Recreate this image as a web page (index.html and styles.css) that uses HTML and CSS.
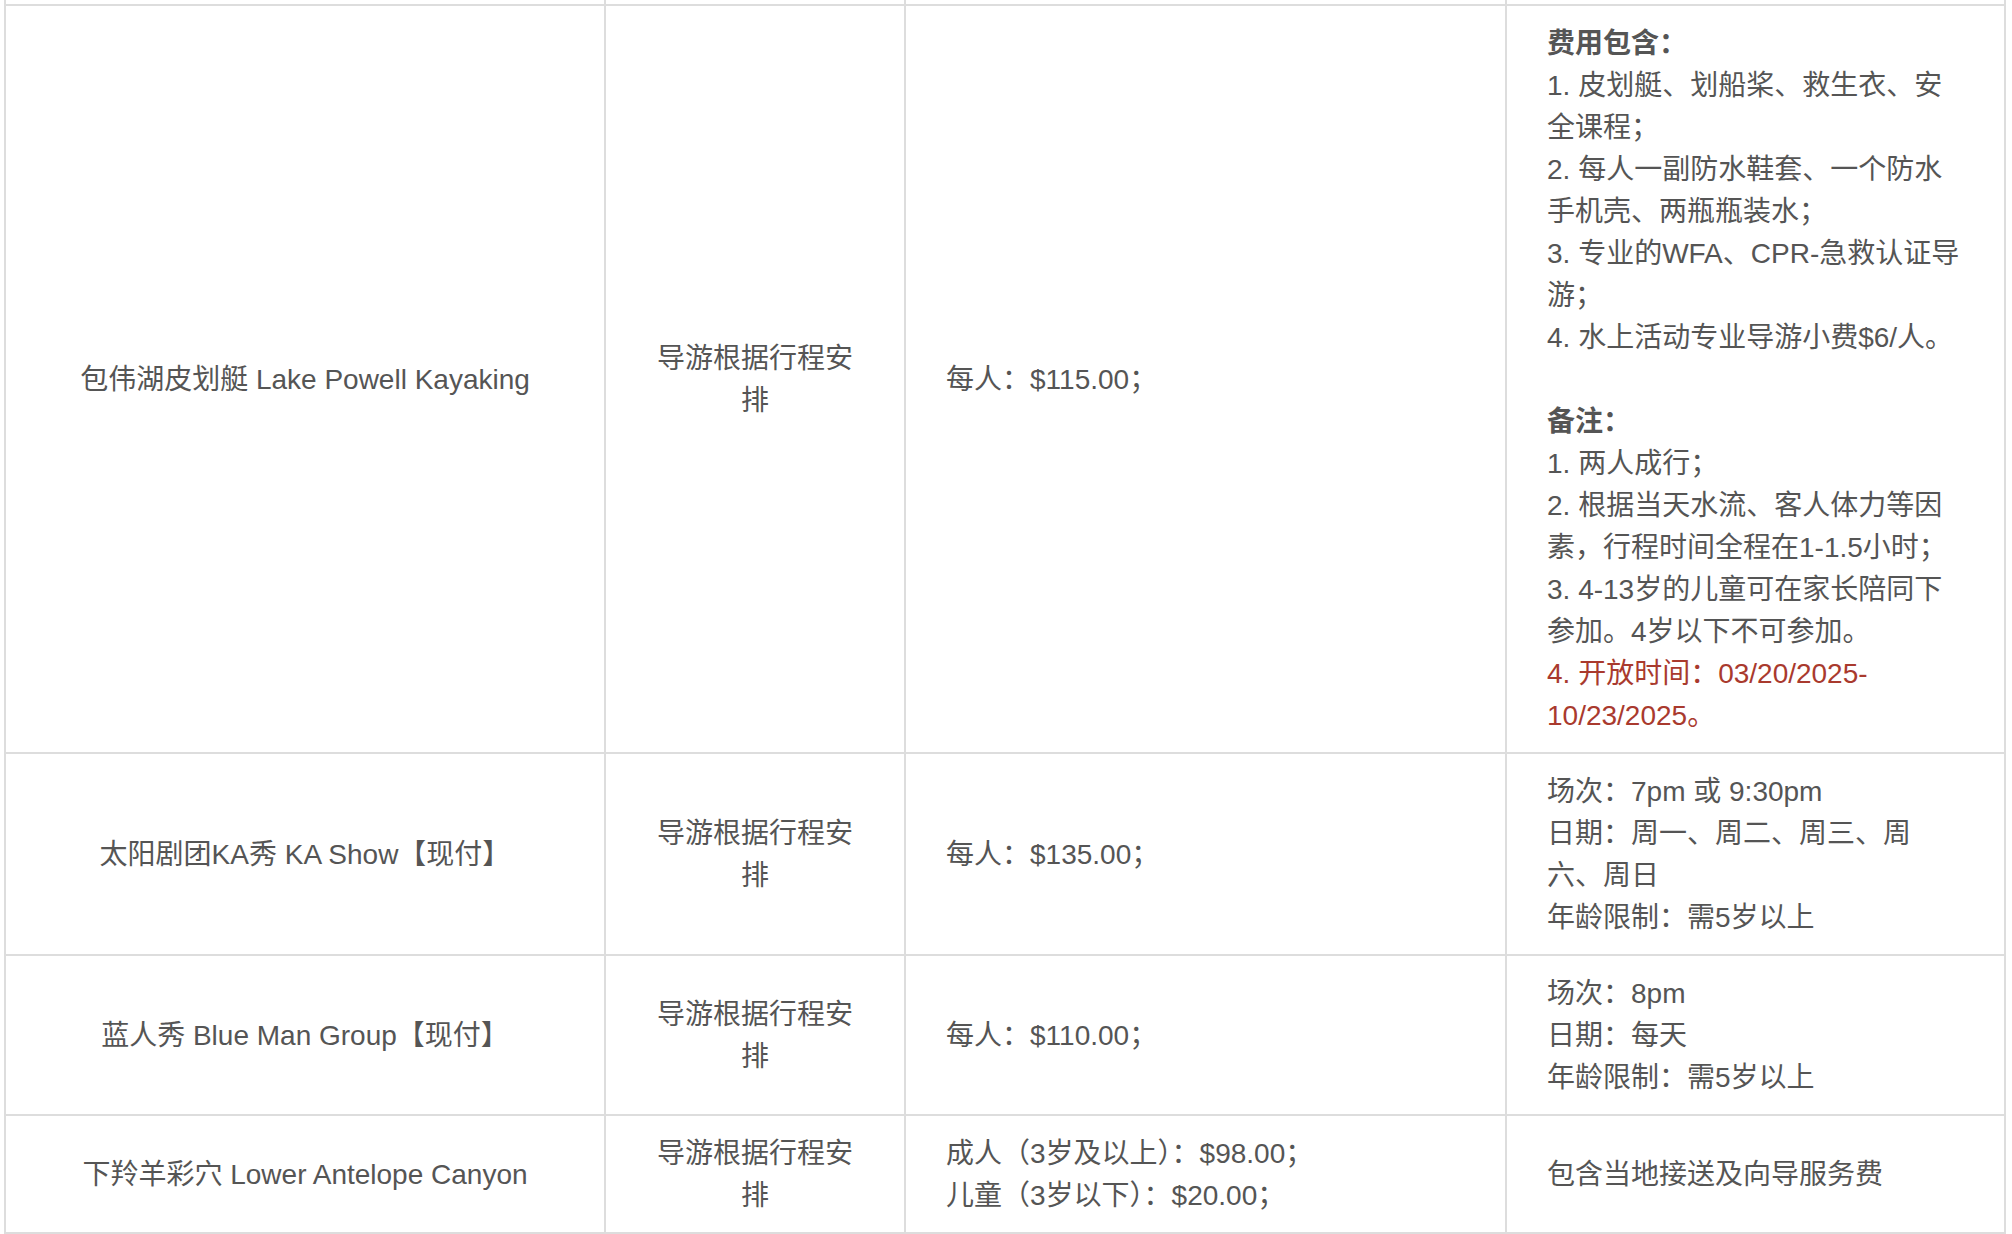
FILE: index.html
```html
<!DOCTYPE html>
<html lang="zh-CN">
<head>
<meta charset="utf-8">
<title>自费项目</title>
<link rel="stylesheet" href="styles.css">
</head>
<body>
<table class="fee-table">
  <tbody>
    <tr class="sliver">
      <td class="c-name"></td>
      <td class="c-guide"></td>
      <td class="c-price"></td>
      <td class="c-note"></td>
    </tr>
    <tr>
      <td class="c-name">包伟湖皮划艇 Lake Powell Kayaking</td>
      <td class="c-guide">导游根据行程安排</td>
      <td class="c-price">每人：$115.00；</td>
      <td class="c-note">
        <p class="note-block"><strong>费用包含：</strong><br>1. 皮划艇、划船桨、救生衣、安全课程；<br>2. 每人一副防水鞋套、一个防水手机壳、两瓶瓶装水；<br>3. 专业的WFA、CPR-急救认证导游；<br>4. 水上活动专业导游小费$6/人。</p>
        <p class="note-block"><strong>备注：</strong><br>1. 两人成行；<br>2. 根据当天水流、客人体力等因素，行程时间全程在1-1.5小时；<br>3. 4-13岁的儿童可在家长陪同下参加。4岁以下不可参加。<br><span class="red">4. 开放时间：03/20/2025-10/23/2025。</span></p>
      </td>
    </tr>
    <tr>
      <td class="c-name">太阳剧团KA秀 KA Show【现付】</td>
      <td class="c-guide">导游根据行程安排</td>
      <td class="c-price">每人：$135.00；</td>
      <td class="c-note">场次：7pm 或 9:30pm<br>日期：周一、周二、周三、周六、周日<br>年龄限制：需5岁以上</td>
    </tr>
    <tr>
      <td class="c-name">蓝人秀 Blue Man Group【现付】</td>
      <td class="c-guide">导游根据行程安排</td>
      <td class="c-price">每人：$110.00；</td>
      <td class="c-note">场次：8pm<br>日期：每天<br>年龄限制：需5岁以上</td>
    </tr>
    <tr>
      <td class="c-name">下羚羊彩穴 Lower Antelope Canyon</td>
      <td class="c-guide">导游根据行程安排</td>
      <td class="c-price">成人（3岁及以上）：$98.00；<br>儿童（3岁以下）：$20.00；</td>
      <td class="c-note">包含当地接送及向导服务费</td>
    </tr>
  </tbody>
</table>
</body>
</html>
```

FILE: styles.css
```css
html, body {
  margin: 0;
  padding: 0;
  background: #ffffff;
}

body {
  font-family: "Liberation Sans", "Noto Sans CJK SC", sans-serif;
  font-size: 28px;
  line-height: 42px;
  color: #555555;
}

.fee-table {
  margin-left: 4px;
  width: 2002px;
  table-layout: fixed;
  border-collapse: separate;
  border-spacing: 0;
}

.fee-table td {
  box-sizing: border-box;
  padding: 17px 40px 15px;
  vertical-align: middle;
  border-right: 2px solid #dddddd;
  border-bottom: 2px solid #dddddd;
  word-wrap: break-word;
}

.fee-table td:first-child {
  border-left: 2px solid #dddddd;
}

.fee-table .sliver td {
  height: 6px;
  padding: 0;
  line-height: 0;
}

.c-name {
  width: 602px;
  text-align: center;
}

.c-guide {
  width: 300px;
  text-align: center;
}

.c-price {
  width: 601px;
  text-align: left;
}

.c-note {
  width: 499px;
  text-align: left;
}

.note-block {
  margin: 0;
}

.note-block + .note-block {
  margin-top: 42px;
}

.note-block strong {
  font-weight: 700;
}

.red {
  color: #a93a2e;
}
```
